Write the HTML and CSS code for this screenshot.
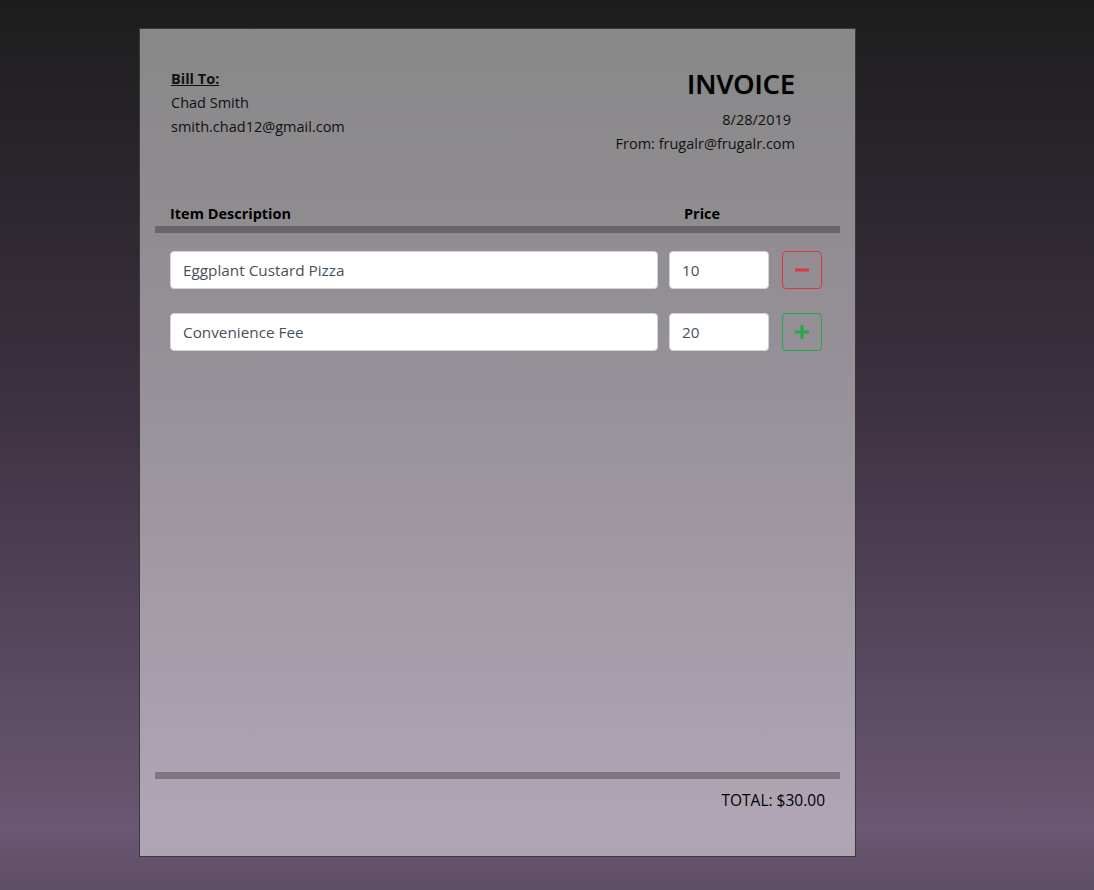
FILE: index.html
```html
<!DOCTYPE html>
<html lang="en">
<head>
<meta charset="utf-8">
<title>Invoice</title>
<link rel="stylesheet" href="styles.css">
</head>
<body>
<main class="invoice">
  <header class="invoice-head">
    <div class="bill-to">
      <div class="bill-label">Bill To:</div>
      <div>Chad Smith</div>
      <div>smith.chad12@gmail.com</div>
    </div>
    <div class="meta">
      <h1 class="title">INVOICE</h1>
      <div class="date">8/28/2019</div>
      <div>From: frugalr@frugalr.com</div>
    </div>
  </header>

  <div class="cols">
    <div class="col-desc">Item Description</div>
    <div class="col-price">Price</div>
  </div>
  <div class="bar"></div>

  <section class="items">
    <div class="row">
      <input class="field" type="text" value="Eggplant Custard Pizza">
      <input class="field" type="text" value="10">
      <button class="btn btn-remove" type="button" aria-label="Remove item">
        <svg width="16" height="16" viewBox="0 0 16 16"><rect x="1" y="6.5" width="14" height="3" fill="currentColor"/></svg>
      </button>
    </div>
    <div class="row">
      <input class="field" type="text" value="Convenience Fee">
      <input class="field" type="text" value="20">
      <button class="btn btn-add" type="button" aria-label="Add item">
        <svg width="16" height="16" viewBox="0 0 16 16"><rect x="1" y="6.5" width="14" height="3" fill="currentColor"/><rect x="6.5" y="1" width="3" height="14" fill="currentColor"/></svg>
      </button>
    </div>
  </section>

  <div class="bar"></div>
  <div class="total">TOTAL: $30.00</div>
</main>
</body>
</html>
```

FILE: styles.css
```css
html, body {
  margin: 0;
  padding: 0;
}
body {
  min-height: 890px;
  background: linear-gradient(to bottom, #1d1d1d 0%, #3c3140 45%, #6a5773 93%, #5f4e68 100%);
  font-family: "Open Sans", "Noto Sans", sans-serif;
  font-size: 14.5px;
  line-height: 24px;
  color: #111;
  padding: 28px 0 0 139px;
  box-sizing: border-box;
}
.invoice {
  width: 717px;
  height: 829px;
  box-sizing: border-box;
  border: 1px solid #3a383b;
  background: rgba(255, 255, 255, 0.47);
  display: flex;
  flex-direction: column;
}
.invoice-head {
  display: flex;
  justify-content: space-between;
  padding: 38px 60px 0 31px;
}
.bill-label {
  font-weight: 700;
  text-decoration: underline;
}
.meta {
  text-align: right;
}
.title {
  margin: 1px 0 8px;
  font-size: 27px;
  line-height: 32px;
  font-weight: 600;
  color: #000;
  text-shadow: 0 0 1px rgba(0, 0, 0, 0.6);
}
.date {
  padding-right: 4px;
}
.cols {
  display: grid;
  grid-template-columns: 488px 100px;
  column-gap: 11px;
  margin: 46px 0 0 30px;
  font-weight: 700;
  color: #000;
}
.col-price {
  padding-left: 15px;
}
.bar {
  height: 7px;
  margin: 0 15px;
  background: rgba(0, 0, 0, 0.27);
}
.items {
  flex: 1;
  padding: 18px 0 0 30px;
  display: flex;
  flex-direction: column;
  gap: 24px;
}
.row {
  display: grid;
  grid-template-columns: 488px 100px 40px;
  column-gap: 11px;
  align-items: center;
}
.row .btn {
  margin-left: 2px;
}
.field {
  height: 38px;
  box-sizing: border-box;
  padding: 0 12px;
  border: 1px solid #ced4da;
  border-radius: 4px;
  background: #fff;
  font-family: "Open Sans", "Noto Sans", sans-serif;
  font-size: 15.3px;
  color: #495057;
  width: 100%;
  margin: 0;
}
.btn {
  width: 40px;
  height: 38px;
  box-sizing: border-box;
  border-radius: 4px;
  background: transparent;
  padding: 0;
  display: flex;
  align-items: center;
  justify-content: center;
  cursor: pointer;
}
.btn-remove {
  border: 1px solid #dc3545;
  color: #dc3545;
}
.btn-add {
  border: 1px solid #28a745;
  color: #28a745;
}
.total {
  text-align: right;
  padding: 9px 30px 44px 0;
  font-size: 15.5px;
  color: #000;
}
```
